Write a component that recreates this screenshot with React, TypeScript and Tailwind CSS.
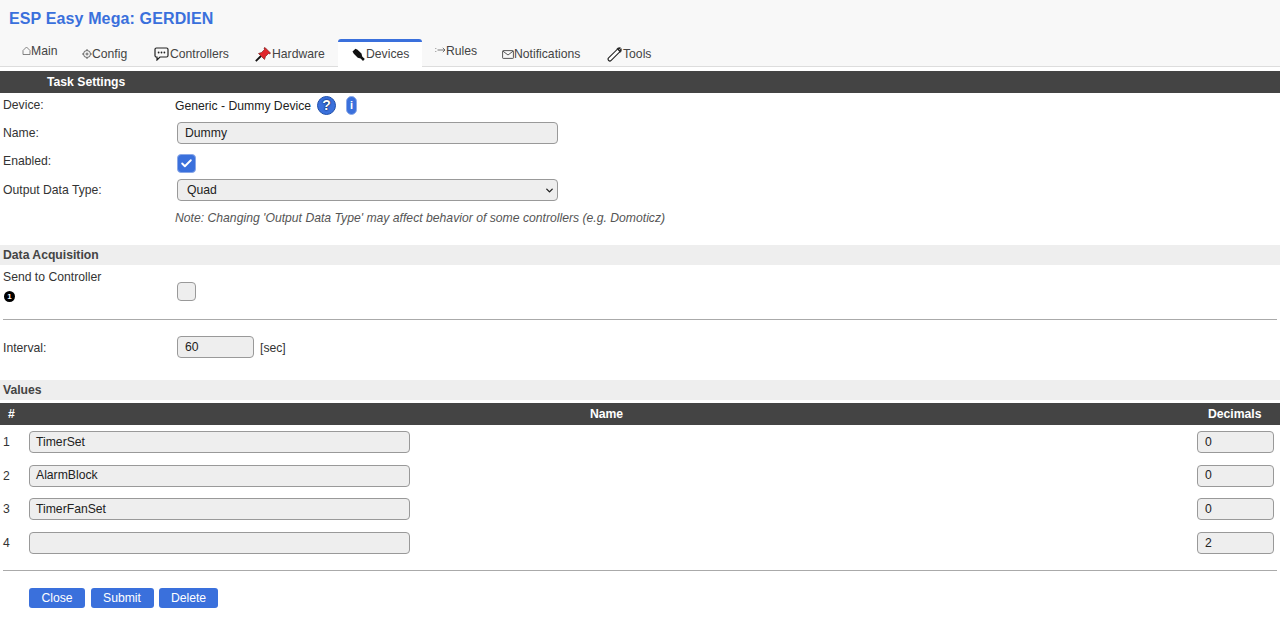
import { Check, ChevronDown } from "lucide-react";

const font = { fontFamily: '"Liberation Sans", Arial, sans-serif' };

function HomeIcon() {
  return (
    <svg width="9" height="9" viewBox="0 0 9 9" fill="none" stroke="#666" strokeWidth="0.8" className="mb-0.5">
      <path d="M1 8.5V4.5L4.5 1L8 4.5V8.5Z" />
    </svg>
  );
}

function GearIcon() {
  return (
    <svg width="10" height="10" viewBox="0 0 10 10" fill="none" stroke="#555" strokeWidth="0.9">
      <circle cx="5" cy="5" r="3.5" />
      <circle cx="5" cy="5" r="1" />
      <path d="M5 0V1.2M5 8.8V10M0 5H1.2M8.8 5H10" />
    </svg>
  );
}

function ChatIcon() {
  return (
    <svg width="15" height="14" viewBox="0 0 15 14" fill="none" className="mr-px">
      <path d="M2.5 1H12.5C13.4 1 14 1.6 14 2.5V8.5C14 9.4 13.4 10 12.5 10H6L3 13V10H2.5C1.6 10 1 9.4 1 8.5V2.5C1 1.6 1.6 1 2.5 1Z" stroke="#222" strokeWidth="1.2" />
      <circle cx="4.6" cy="5.5" r="0.9" fill="#222" />
      <circle cx="7.5" cy="5.5" r="0.9" fill="#222" />
      <circle cx="10.4" cy="5.5" r="0.9" fill="#222" />
    </svg>
  );
}

function PinIcon() {
  return (
    <svg width="16" height="15" viewBox="0 0 16 15" className="mr-px">
      <path d="M0.8 14.2L6 9" stroke="#111" strokeWidth="1.8" />
      <path d="M3.5 6.5L6.5 5.5L9.5 2.5L9 1L10 0.5L15.5 6L14.8 7L13.5 6.5L10.5 9.5L9.5 12.5Z" fill="#e0252b" stroke="#6d1414" strokeWidth="0.6" />
    </svg>
  );
}

function PlugIcon() {
  return (
    <svg width="13" height="14" viewBox="0 0 13 14" className="mr-px">
      <path d="M0.5 3.5L3.5 0.8L5.5 1.8L9.5 5.5L10.2 8.4L12.8 11L11 13L8.6 10.6L5.8 9.8L1.8 5.8Z" fill="#111" />
    </svg>
  );
}

function ArrowIcon() {
  return (
    <svg width="11" height="8" viewBox="0 0 11 8" fill="none" stroke="#555" strokeWidth="0.8" className="mb-0.5">
      <path d="M0.8 2V2.8M0.8 5.2V6M2.5 4H10M7.8 1.8L10 4L7.8 6.2" />
    </svg>
  );
}

function MailIcon() {
  return (
    <svg width="12" height="9" viewBox="0 0 12 9" fill="none" stroke="#444" strokeWidth="0.9">
      <rect x="0.6" y="0.6" width="10.8" height="7.8" rx="0.6" />
      <path d="M1 1.2L6 5L11 1.2" />
    </svg>
  );
}

function WrenchIcon() {
  return (
    <svg width="15" height="15" viewBox="0 0 15 15" fill="none" className="mr-px">
      <path d="M1.6 10.8L9.8 2.8C10.2 1.4 11.6 0.6 13 1L11.2 2.8L12.4 4L14 2.2C14.4 3.6 13.6 5 12.2 5.4L4.2 13.4C3.4 14.2 2.4 14.2 1.7 13.5C1 12.8 0.9 11.6 1.6 10.8Z" fill="#fff" stroke="#222" strokeWidth="1.1" />
    </svg>
  );
}

const tabs = [
  { label: "Main", icon: <HomeIcon />, w: "w-[60px]", raised: true },
  { label: "Config", icon: <GearIcon />, w: "w-[72px]" },
  { label: "Controllers", icon: <ChatIcon />, w: "w-[101px]" },
  { label: "Hardware", icon: <PinIcon />, w: "w-[83px]" },
];

const tabsRight = [
  { label: "Rules", icon: <ArrowIcon />, w: "w-[67px]", raised: true },
  { label: "Notifications", icon: <MailIcon />, w: "w-[105px]" },
  { label: "Tools", icon: <WrenchIcon />, w: "w-[80px]" },
];

function Tab({ label, icon, w, raised }: { label: string; icon: React.ReactNode; w: string; raised?: boolean }) {
  return (
    <div className={`${w} flex items-center h-[27px] text-[12.2px] text-[#444] ${raised ? "pb-[5px]" : "pt-[1px]"}`}>
      {icon}
      <span>{label}</span>
    </div>
  );
}

function TextBox({ value, className }: { value: string; className: string }) {
  return (
    <div className={`h-[22px] flex items-center bg-[#eeeeee] border border-[#999999] rounded-[4px] text-[12.2px] text-[#222] ${className}`}>
      {value}
    </div>
  );
}

function SectionBar({ title, className }: { title: string; className: string }) {
  return (
    <div className={`h-5 pl-[3px] flex items-center bg-[#eeeeee] text-[12.2px] font-bold text-[#444] ${className}`}>
      {title}
    </div>
  );
}

function FormRow({ label, height, labelPad, children }: { label: React.ReactNode; height: string; labelPad?: string; children?: React.ReactNode }) {
  return (
    <div className={`flex ${height}`}>
      <div className={`w-[175px] pl-[3px] shrink-0 text-[12.2px] text-[#333] ${labelPad ?? ""}`}>{label}</div>
      {children}
    </div>
  );
}

const values = [
  { n: 1, name: "TimerSet", dec: "0" },
  { n: 2, name: "AlarmBlock", dec: "0" },
  { n: 3, name: "TimerFanSet", dec: "0" },
  { n: 4, name: "", dec: "2" },
];

const buttons = [
  { label: "Close", w: "w-[56px]" },
  { label: "Submit", w: "w-[63px]" },
  { label: "Delete", w: "w-[59px]" },
];

export default function App() {
  return (
    <div style={font} className="w-[1280px] h-[624px] overflow-hidden bg-white">
      {/* Header and tabs */}
      <div className="h-[67px] bg-[#f8f8f8] border-b border-[#dddddd]">
        <div className="h-[40px] pl-[9px] pt-[10px] text-[16px] leading-[18px] font-bold tracking-[0.13px] text-[#3a70dc]">
          ESP Easy Mega: GERDIEN
        </div>
        <div className="flex pl-[22px]">
          {tabs.map((t) => (
            <Tab key={t.label} {...t} />
          ))}
          <div className="w-[84px] h-[28px] -mt-px bg-white border-t-[3px] border-[#3a70dc] flex items-center pl-[14px] text-[12.2px] text-[#444] rounded-t-[3px]">
            <PlugIcon />
            <span>Devices</span>
          </div>
          <div className="w-[13px]" />
          {tabsRight.map((t) => (
            <Tab key={t.label} {...t} />
          ))}
        </div>
      </div>

      {/* Task settings */}
      <div className="mt-[4px] h-[22px] bg-[#444444] pl-[47px] flex items-center text-[12.2px] font-bold text-white">
        Task Settings
      </div>
      <div className="pt-[3px]">
        <FormRow label="Device:" height="h-[26px]">
          <div className="flex items-start text-[12.2px] text-[#222]">
            <span className="pt-[1px]">Generic - Dummy Device</span>
            <span className="ml-[6px] w-[19px] h-[19px] rounded-full bg-[#3a70dc] border border-[#1f4fa8] text-white text-[14px] font-bold leading-[17px] text-center [text-shadow:0_0_1.5px_#0b1f4a,0_0_1.5px_#0b1f4a]">
              ?
            </span>
            <span className="ml-[10px] w-[11px] h-[19px] rounded-[6px] bg-[#3a70dc] border border-[#8aa8e8] text-white text-[11px] font-bold leading-[17px] text-center">
              i
            </span>
          </div>
        </FormRow>
        <FormRow label="Name:" labelPad="pt-[2px]" height="h-[28px]">
          <TextBox value="Dummy" className="ml-[2px] w-[381px] pl-[7px]" />
        </FormRow>
        <FormRow label="Enabled:" labelPad="pt-[2px]" height="h-[29px]">
          <div className="ml-[2px] mt-[4px] w-[19px] h-[19px] rounded-[4px] bg-[#3a70dc] border border-[#8aa8e8] flex items-center justify-center">
            <Check size={13} strokeWidth={3.5} className="text-white" />
          </div>
        </FormRow>
        <FormRow label="Output Data Type:" labelPad="pt-[2px]" height="h-[29px]">
          <div className="ml-[2px] w-[381px] h-[22px] bg-[#eeeeee] border border-[#999999] rounded-[4px] flex items-center justify-between pl-[9px] pr-[2px] text-[12.2px] text-[#222]">
            <span>Quad</span>
            <ChevronDown size={11} strokeWidth={3} className="text-[#222]" />
          </div>
        </FormRow>
        <FormRow label="" height="h-[36px]">
          <span className="pt-[1px] text-[12.2px] italic text-[#555]">
            Note: Changing 'Output Data Type' may affect behavior of some controllers (e.g. Domoticz)
          </span>
        </FormRow>
      </div>

      {/* Data acquisition */}
      <SectionBar title="Data Acquisition" className="mt-[1px]" />
      <div className="flex h-[54px] pt-[3px]">
        <div className="w-[175px] pl-[3px] shrink-0 text-[12.2px] text-[#333]">
          <div>Send to Controller</div>
          <div className="ml-px mt-[5px] w-[11px] h-[11px] rounded-full bg-black text-white text-[8px] font-bold leading-[11px] text-center">1</div>
        </div>
        <div className="ml-[2px] mt-[14px] w-[19px] h-[19px] rounded-[4px] bg-[#eeeeee] border border-[#999999]" />
      </div>
      <div className="mx-[3px] border-t border-[#aaaaaa]" />
      <div className="flex h-[60px] pt-[16px]">
        <div className="w-[175px] pl-[3px] shrink-0 text-[12.2px] text-[#333] pt-[3px]">Interval:</div>
        <TextBox value="60" className="ml-[2px] w-[77px] pl-[7px]" />
        <span className="ml-[6px] pt-[3px] text-[12.2px] text-[#333]">[sec]</span>
      </div>

      {/* Values */}
      <SectionBar title="Values" className="" />
      <div className="mt-[3px] h-[22px] bg-[#444444] flex items-center text-[12.2px] font-bold text-white">
        <div className="w-[29px] pl-[8px]">#</div>
        <div className="flex-1 text-center pr-[6px]">Name</div>
        <div className="w-[90px] pl-[18px]">Decimals</div>
      </div>
      <div className="pt-[6px]">
        {values.map((v) => (
          <div key={v.n} className="flex items-start h-[33.6px] text-[12.2px] text-[#333]">
            <div className="w-[29px] pl-[3px] pt-[2px]">{v.n}</div>
            <TextBox value={v.name} className="w-[381px] pl-[6px]" />
            <div className="flex-1" />
            <TextBox value={v.dec} className="w-[77px] mr-[6px] pl-[7px]" />
          </div>
        ))}
      </div>
      <div className="mx-[3px] mt-[5px] border-t border-[#aaaaaa]" />

      <div className="pl-[29px] pt-[17px] flex gap-[5.5px]">
        {buttons.map((b) => (
          <div key={b.label} className={`${b.w} h-[20px] bg-[#3a70dc] rounded-[3px] text-[12.2px] leading-[20px] text-center text-white`}>
            {b.label}
          </div>
        ))}
      </div>
    </div>
  );
}
